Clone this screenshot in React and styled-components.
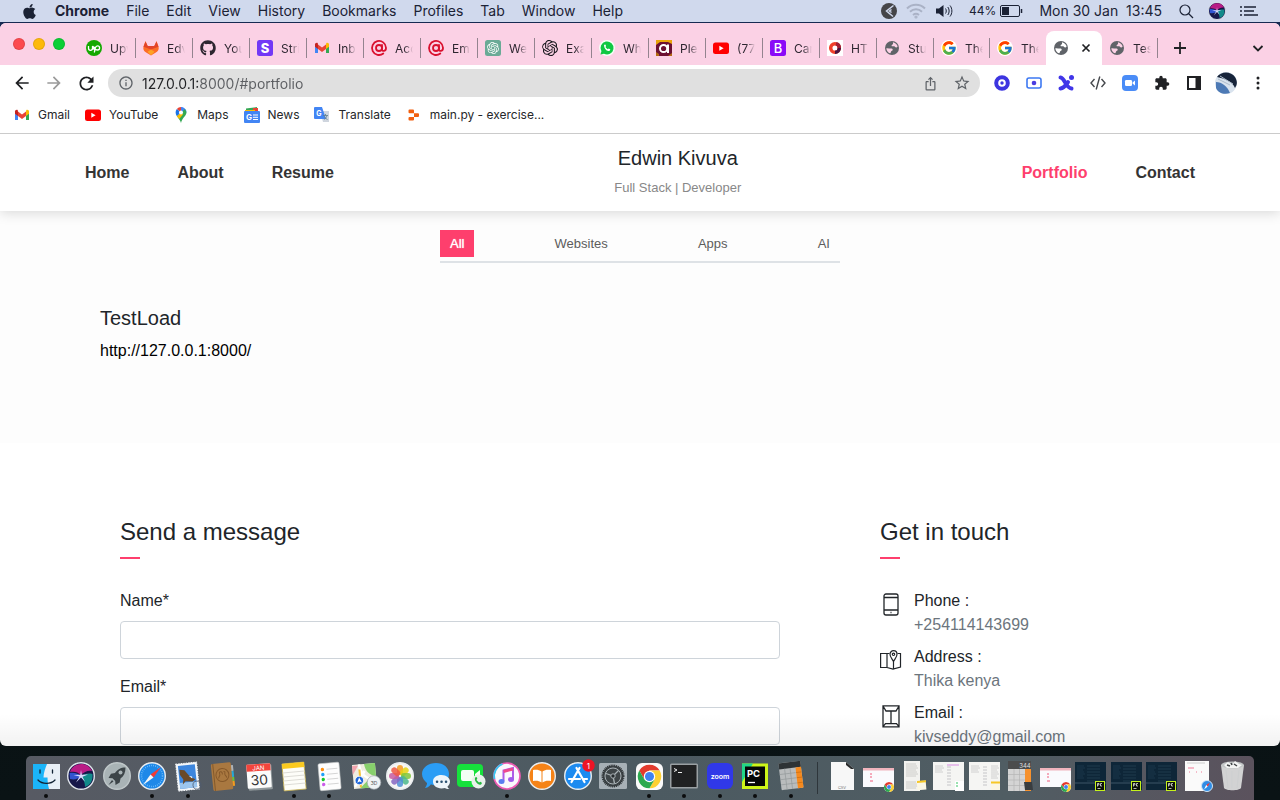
import React from "react";
import styled, { createGlobalStyle, css } from "styled-components";
import { FaApple, FaGithub } from "react-icons/fa";
import { FcGoogle } from "react-icons/fc";
import { SiOpenai } from "react-icons/si";
import { MdExtension, MdStarBorder, MdIosShare, MdArrowBack, MdArrowForward, MdRefresh, MdInfoOutline } from "react-icons/md";

const Global = createGlobalStyle`
  * { box-sizing: border-box; }
  body { margin: 0; background: #0a1214; }
  button, input { font: inherit; color: inherit; margin: 0; padding: 0; border: 0; background: none; }
  a { color: inherit; text-decoration: none; }
  svg { display: block; flex: none; overflow: visible; }
`;

const Desktop = styled.div`
  display: flex;
  flex-direction: column;
  height: 100vh;
  background: linear-gradient(#172a52 0 60px, #070f11 200px, #0a1315);
  font-family: Inter, "Liberation Sans", sans-serif;
`;

/* ---------- macOS menu bar ---------- */
const MenuBar = styled.header`
  display: flex;
  align-items: center;
  justify-content: space-between;
  height: 22px;
  margin-bottom: 1px;
  padding: 0 22px 0 21px;
  background: #d0d9ed;
  color: #1b2235;
  font-size: 14px;
  line-height: 22px;
`;
const MenuGroup = styled.nav`
  display: flex;
  align-items: center;
  gap: ${(p) => p.$gap}px;
`;
const MenuItem = styled.button`
  font-weight: ${(p) => (p.$strong ? 700 : 400)};
  white-space: pre;
`;
const Charge = styled.span`
  display: flex;
  align-items: center;
  gap: 4px;
  font-size: 12px;
`;

/* ---------- browser window ---------- */
const BrowserWindow = styled.div`
  display: flex;
  flex-direction: column;
  flex: 1;
  min-height: 0;
  overflow: hidden;
  border-radius: 6px;
  background: #fff;
`;
const TabStrip = styled.div`
  display: flex;
  align-items: flex-end;
  flex: none;
  height: 42px;
  background: #fbd1e5;
  color: #2d2630;
`;
const Lights = styled.div`
  display: flex;
  align-self: center;
  gap: 8px;
  width: 79px;
  padding-left: 13px;
`;
const Light = styled.button`
  width: 12px;
  height: 12px;
  border-radius: 50%;
  background: ${(p) => p.$color};
  box-shadow: inset 0 0 0 1px rgba(0, 0, 0, 0.1);
`;
const Tabs = styled.div`
  display: flex;
  flex: 1;
  min-width: 0;
`;
const Tab = styled.button`
  position: relative;
  display: flex;
  align-items: center;
  flex: 1 1 57px;
  min-width: 0;
  height: 34px;
  padding-left: 7px;
  gap: 8px;
  font-size: 12px;
  &:nth-last-child(-n + 4) { flex-basis: 56px; }
  &::after {
    content: "";
    position: absolute;
    right: 0;
    top: 7px;
    width: 1px;
    height: 20px;
    background: #94838f;
  }
  &:has(+ [aria-selected="true"])::after { display: none; }
  ${(p) =>
    p.$active &&
    css`
      background: #fff;
      border-radius: 8px 8px 0 0;
      &::after { display: none; }
    `}
`;
const TabTitle = styled.span`
  width: 18px;
  overflow: hidden;
  text-align: left;
  white-space: nowrap;
  mask-image: linear-gradient(90deg, #000 50%, transparent);
`;
const StripEnd = styled.div`
  display: flex;
  align-items: center;
  justify-content: space-between;
  width: 122px;
  height: 34px;
  padding: 0 14px;
`;
const IconButton = styled.button`
  display: flex;
  align-items: center;
  justify-content: center;
  width: ${(p) => p.$w || 16}px;
  color: ${(p) => p.$color || "#1f2023"};
`;
const Toolbar = styled.div`
  display: flex;
  align-items: center;
  flex: none;
  height: 36px;
  padding: 0 14px 0 13px;
`;
const NavButtons = styled.div`
  display: flex;
  gap: 14px;
  margin-right: 13px;
`;
const Omnibox = styled.div`
  display: flex;
  align-items: center;
  flex: 1;
  height: 28px;
  padding: 0 2px 0 10px;
  gap: 8px;
  border-radius: 14px;
  background: #e0e0e0;
  color: #5f6368;
`;
const Address = styled.input`
  flex: 1;
  min-width: 0;
  height: 28px;
  font-size: 14px;
  background: linear-gradient(90deg, #202124 0 56px, #5c5e62 56px);
  background-clip: text;
  -webkit-text-fill-color: transparent;
  outline: none;
`;
const Extensions = styled.div`
  display: flex;
  align-items: center;
  gap: 16px;
  margin-left: 14px;
`;
const Avatar = styled.button`
  margin: 0 -3px;
`;
const BookmarkBar = styled.nav`
  display: flex;
  align-items: flex-start;
  flex: none;
  gap: 15px;
  height: 33px;
  padding: 6px 14px 0;
  border-bottom: 1px solid #cbcbcb;
  font-size: 12px;
  line-height: 16px;
  color: #26272a;
`;
const Bookmark = styled.a`
  display: flex;
  align-items: center;
  gap: 8px;
`;

/* ---------- web page ---------- */
const Page = styled.div`
  position: relative;
  flex: 1;
  min-height: 0;
  overflow: hidden;
  font: 16px/24px "Liberation Sans", Arial, sans-serif;
  color: #212529;
  &::after {
    content: "";
    position: absolute;
    inset: auto 0 0;
    height: 32px;
    background: linear-gradient(transparent, rgba(0, 0, 0, 0.05));
    pointer-events: none;
  }
`;
const SiteHeader = styled.header`
  position: relative;
  background: #fff;
  box-shadow: 0 2px 12px rgba(0, 0, 0, 0.15);
`;
const HeaderInner = styled.div`
  display: flex;
  align-items: center;
  justify-content: space-between;
  max-width: 1140px;
  height: 77px;
  margin: 0 auto;
  padding: 0 15px;
`;
const SiteNav = styled.nav`
  display: flex;
  gap: 48px;
`;
const SiteLink = styled.a`
  font-weight: 700;
  color: ${(p) => (p.$active ? "#fe3f6d" : "#343434")};
`;
const Brand = styled.div`
  text-align: center;
`;
const BrandName = styled.h1`
  margin: 0 0 6px;
  font-size: 20px;
  line-height: 24px;
  font-weight: 400;
`;
const BrandRole = styled.p`
  margin: 0;
  font-size: 13px;
  line-height: 24px;
  color: #888;
`;
const PortfolioSection = styled.section`
  background: #fdfdfd;
  padding: 19px 0 80px;
`;
const Filters = styled.div`
  display: flex;
  justify-content: space-between;
  width: 400px;
  margin: 0 auto;
  padding-bottom: 4px;
  border-bottom: 2px solid #dee2e6;
`;
const Filter = styled.button`
  height: 27px;
  padding: 0 10px;
  font-size: 13px;
  color: ${(p) => (p.$active ? "#fff" : "#5c5c5c")};
  text-shadow: ${(p) => (p.$active ? "0 0 1px #fff" : "none")};
  background: ${(p) => (p.$active ? "#fe3f6d" : "transparent")};
`;
const Project = styled.article`
  max-width: 1140px;
  margin: 43px auto 0;
  padding: 0 30px;
`;
const ProjectTitle = styled.h2`
  margin: 0 0 9px;
  font-size: 20px;
  line-height: 24px;
  font-weight: 400;
`;
const ProjectLink = styled.a`
  color: #000;
`;
const ContactSection = styled.section`
  display: grid;
  grid-template-columns: 2fr 1fr;
  max-width: 1140px;
  margin: 0 auto;
  padding-top: 75px;
`;
const Column = styled.div`
  padding: 0 50px;
`;
const Heading = styled.h2`
  margin: 0 0 30px;
  font-size: 24px;
  line-height: 28px;
  font-weight: 400;
  &::after {
    content: "";
    display: block;
    width: 20px;
    height: 2px;
    margin-top: 11px;
    background: #fe3f6d;
  }
`;
const Label = styled.label`
  display: block;
  margin-bottom: 8px;
`;
const Field = styled.input`
  display: block;
  width: 100%;
  height: 38px;
  margin-bottom: 16px;
  padding: 6px 12px;
  border: 1px solid #ced4da;
  border-radius: 4px;
  background: #fff;
`;
const Info = styled.div`
  display: flex;
  gap: 12px;
  margin-bottom: 8px;
  svg { margin-top: 4px; }
`;
const InfoValue = styled.div`
  color: #6c757d;
`;

/* ---------- dock ---------- */
const Dock = styled.footer`
  display: flex;
  flex: none;
  height: 44px;
  margin: 10px 26px 0;
  padding: 0 4px 0 2px;
  border-radius: 5px 5px 0 0;
  background: linear-gradient(90deg, #575a63, #535c64 20%, #4c5a61 50%, #505d63 80%, #5b525d);
`;
const DockItem = styled.button`
  display: flex;
  flex: 1 1 0;
  flex-direction: column;
  align-items: center;
  justify-content: space-between;
  min-width: 0;
  padding: 6px 0 2px;
`;
const Running = styled.i`
  width: 4px;
  height: 4px;
  border-radius: 50%;
  background: #0b0c0d;
  visibility: ${(p) => (p.$on ? "visible" : "hidden")};
`;
const DockRule = styled.div`
  width: 16px;
  margin: 6px 0;
  background: linear-gradient(90deg, transparent 9px, #2e363b 9px 10px, transparent 10px);
`;

/* ---------- drawings ---------- */
const Svg = ({ s = 16, w, h, v, children, ...r }) => (
  <svg width={w || s} height={h || s} viewBox={v || `0 0 ${w || s} ${h || s}`} fill="none" aria-hidden="true" {...r}>
    {children}
  </svg>
);
const T = (p) => <text textAnchor="middle" fontFamily="Inter, sans-serif" fill="#fff" {...p} />;

const Gmail = () => (
  <Svg>
    <path d="M1 4v9h3V7z" fill="#4285f4" />
    <path d="M12 7v6h3V4z" fill="#34a853" />
    <path d="M12 5v4l3-2.300V4.500C15 3 13.500 2.200 12.300 3z" fill="#fbbc04" />
    <path d="M4 5v4L1 6.700V4.500C1 3 2.500 2.200 3.700 3z" fill="#c5221f" />
    <path d="M4 9V4.500l4 3 4-3V9l-4 3z" fill="#ea4335" />
  </Svg>
);
const YouTube = () => (
  <Svg>
    <rect y="2.500" width="16" height="11.500" rx="2.500" fill="#f00" />
    <path d="M6.300 5.800v5l4.300-2.500z" fill="#fff" />
  </Svg>
);
const Upwork = () => (
  <Svg>
    <circle cx="8" cy="8" r="8" fill="#14a800" />
    <path d="M2.500 6v2.300a2 2 0 0 0 4 0V6c.8 2.800 1.800 4 3 4.300M8.300 12.500l1-4.500c.4-1.600 1.200-2.200 2.200-2.200a2.100 2.100 0 1 1 0 4.200c-1.500 0-3-1.300-4-3.500" stroke="#fff" strokeWidth="1.300" />
  </Svg>
);
const Gitlab = () => (
  <Svg>
    <path d="M.5 6.500 2.500 1l2.200 5h6.600l2.200-5 2 5.500c.6 2.500 0 4-1.500 5.200L8 15.500l-6-3.800C.5 10.500 0 9 .5 6.500z" fill="#fc6d26" />
    <path d="M2.500 1.500 4.700 6h6.600l2.200-4.500 2 5.200-3.500 1.200L8 9.500 4 8 .5 6.700z" fill="#e24329" />
    <path d="M4.500 11.800 8 9.400l3.500 2.400L8 15.300z" fill="#fca326" />
  </Svg>
);
const Stripe = () => (
  <Svg>
    <rect width="16" height="16" rx="2.500" fill="#7338f6" />
    <T x="8" y="12.500" fontSize="13" fontWeight="800">S</T>
  </Svg>
);
const MailRu = () => (
  <Svg stroke="#d9112f" strokeWidth="1.800" strokeLinecap="round">
    <circle cx="8" cy="8" r="3" />
    <path d="M11 5v4.200c0 2.800 4.200 2 4-1.500a7 7 0 1 0-2.700 5.800" />
  </Svg>
);
const Gpt = () => (
  <Svg>
    <rect width="16" height="16" rx="2.500" fill="#6aaa96" />
    <SiOpenai x="2" y="2" size={12} color="#fff" />
  </Svg>
);
const WhatsApp = () => (
  <Svg>
    <circle cx="8" cy="8" r="8" fill="#f4fff6" />
    <path d="M1.500 14.500 2.400 11.200A6.500 6.500 0 1 1 5 13.700z" fill="#10c843" />
    <path d="M5 5.200c.5-1 1.200-1 1.500-.4l.6 1.300-.6 1c.6 1.100 1.300 1.700 2.300 2.200l.9-.9 1.500.8c.3 1.200-.8 1.900-1.800 1.800C7 10.600 5 8.200 5 5.200z" fill="#fff" />
  </Svg>
);
const Aplus = () => (
  <Svg>
    <path d="M0 0h16v16H0z" fill="#6c1033" />
    <path d="M0 0h16v4L12 2H4L0 5z" fill="#e9a40b" />
    <path d="M0 16v-4l3 2v2zM16 16v-3l-4 3z" fill="#b56a13" />
    <circle cx="7.600" cy="8.500" r="3.600" stroke="#fff" strokeWidth="2" />
    <path d="M12 4.500V13" stroke="#fff" strokeWidth="2" />
  </Svg>
);
const Bootstrap = () => (
  <Svg>
    <rect width="16" height="16" rx="2.500" fill="#8a0af8" />
    <T x="8" y="12.500" fontSize="13" fontWeight="500">B</T>
  </Svg>
);
const HtmlDoc = () => (
  <Svg>
    <path d="M0 0h16v16H0z" fill="#fff" />
    <circle cx="8" cy="8" r="4.300" stroke="#f0402a" strokeWidth="3.500" />
    <path d="M8 12.300A4.300 4.300 0 0 0 12.300 8" stroke="#4a1340" strokeWidth="3.500" />
    <path d="M12.300 8A4.300 4.300 0 0 0 9 3.800" stroke="#a11f35" strokeWidth="3.500" />
  </Svg>
);
const Globe = ({ on = "#fbd1e5" }) => (
  <Svg>
    <circle cx="8" cy="8" r="7" fill="#5f6368" />
    <path d="M9 2.200c1.800.3 3.700 1.700 4.400 3.600.4 1.200-.2 1.800-1.300 1.700-1-.1-.9-1.200-2-1.300-1.200-.1-2.300.6-2.500-.5-.2-1 1.300-.9 1.500-1.900.1-.6-.4-1-.1-1.600zM2.300 8.200c1.700-.2 3 .2 4.500.4 1.100.1 2.100.4 1.900 1.400-.2.900-1.400.8-1.700 1.600-.2.700-.1 1.500-.9 1.700-1.900-.6-3.700-2.600-3.800-5.100z" fill={on} />
  </Svg>
);
const Google = () => (
  <Svg>
    <circle cx="8" cy="8" r="8" fill="#fff" />
    <FcGoogle x="0" y="0" size={16} />
  </Svg>
);
const MapsPin = () => (
  <Svg>
    <path d="M8 0a5.500 5.500 0 0 0-4.200 2L8 5.500z" fill="#ea4335" />
    <path d="M8 0c3.300 0 5.500 2.600 5.500 5.300L8 5.500 8 0z" fill="#4285f4" />
    <path d="M3.800 2C2 4.300 2.400 7 3.900 9.200L8 5.500z" fill="#1a73e8" />
    <path d="M13.500 5.300C13.500 9 9 11 8 16 7.300 13 5.500 11.500 3.900 9.200L12 2z" fill="#34a853" />
    <path d="M3.900 9.200 8 5.500l2 2-3.800 4.600z" fill="#fbbc04" />
    <circle cx="8" cy="5.500" r="2" fill="#fff" />
  </Svg>
);
const News = () => (
  <Svg>
    <path d="M2 1.500 13 0v4H2z" fill="#34a853" />
    <path d="M9 1h5v4H9z" fill="#ea4335" />
    <path d="M1 3h10v3H1z" fill="#fbbc04" />
    <rect y="4" width="16" height="12" rx="1" fill="#4285f4" />
    <T x="5" y="13" fontSize="8" fontWeight="700">G</T>
    <path d="M9 8h5M9 10.300h5M9 12.500h5" stroke="#fff" />
  </Svg>
);
const Translate = () => (
  <Svg>
    <path d="M6 4h9v11H9z" fill="#cfd5de" />
    <path d="M1 0h7l4 12H1a1 1 0 0 1-1-1V1a1 1 0 0 1 1-1z" fill="#4285f4" />
    <T x="5" y="8.500" fontSize="7" fontWeight="700">G</T>
    <path d="M9 8.500h5M11.500 7v1.500M13 8.500c-.5 2-2 3.500-3 4M10.500 9.500c.5 1.500 2 2.500 3 3" stroke="#607d8b" strokeWidth=".8" />
  </Svg>
);
const Replit = () => (
  <Svg>
    <path d="M3.500 2.500H7a1 1 0 0 1 1 1v2.700H3.500a1 1 0 0 1-1-1V3.500a1 1 0 0 1 1-1zM8 6.200h4a1 1 0 0 1 1 1v1.700a1 1 0 0 1-1 1H8zM3.500 9.900H8v2.700a1 1 0 0 1-1 1H3.500a1 1 0 0 1-1-1v-1.700a1 1 0 0 1 1-1z" fill="#f25f0f" />
  </Svg>
);

const tabs = [
  ["Upv", Upwork], ["Edv", Gitlab], ["You", () => <FaGithub size={16} />], ["Stri", Stripe], ["Inb", Gmail],
  ["Acc", MailRu], ["Em", MailRu], ["We", Gpt], ["Exa", () => <SiOpenai size={16} color="#17171c" />],
  ["Wh", WhatsApp], ["Ple", Aplus], ["(77", YouTube], ["Car", Bootstrap], ["HT", HtmlDoc],
  ["Stu", Globe], ["The", Google], ["The", Google], [null, () => <Globe on="#fff" />], ["Tes", Globe],
];
const bookmarks = [
  ["Gmail", Gmail], ["YouTube", YouTube], ["Maps", MapsPin], ["News", News], ["Translate", Translate], ["main.py - exercise...", Replit],
];

const PhoneIcon = () => (
  <Svg s={22} stroke="#212529" strokeWidth="1.300">
    <rect x="4" y="1" width="14" height="21" rx="2" />
    <path d="M4 4.500h14M4 17h14" />
    <path d="M10.500 19.500h1" />
  </Svg>
);
const MapIcon = () => (
  <Svg s={22} stroke="#212529" strokeWidth="1.200">
    <path d="M9.500 4.500H7L.6 4.500v14H7l6 1.600 7.500-2V4.500h-3M7 4.500v14M13.500 12.500v7.500" />
    <path d="M13.500 12.500c-1.500-3-3.500-4.500-3.500-7.300a3.500 3.500 0 0 1 7 0c0 2.800-2 4.300-3.500 7.300z" />
    <circle cx="13.500" cy="5.300" r="1.200" />
  </Svg>
);
const MailIcon = () => (
  <Svg s={22} stroke="#212529" strokeWidth="1.300">
    <path d="M3 .8h16v21H3zM3 1l3 5h10l3-5M3 21.600l2.500-3h11l2.500 3M11 6v12.500" />
  </Svg>
);

/* dock drawings, all on a 28px square */
const Disc = ({ fill, ring = "#e9edf0" }) => <circle cx="14" cy="14" r="13.300" fill={fill} stroke={ring} strokeWidth="1.400" />;
const ChromeMark = ({ x = 14, y = 14, k = 1 }) => (
  <g transform={`translate(${x} ${y}) scale(${k})`}>
    <circle r="12" fill="#fff" />
    <path d="M-10.400-6A12 12 0 0 1 10.400-6L0-6-5.200 3z" fill="#e33b2e" />
    <path d="M10.400-6A12 12 0 0 1 0 12L5.200 3 0-6z" fill="#fdd032" />
    <path d="M0 12A12 12 0 0 1-10.400-6L-5.200 3 5.200 3z" fill="#2da94f" />
    <circle r="5.800" fill="#fff" />
    <circle r="4.600" fill="#3f82f1" />
  </g>
);
const PyMark = ({ x = 16, y = 17, s = 10 }) => (
  <g transform={`translate(${x} ${y})`}>
    <rect width={s} height={s} fill="#c5f21b" />
    <rect x="1" y="1" width={s - 2} height={s - 2} fill="#0b1008" />
    <path d="M2.500 5.500v-3h1.500v1.500h-1.500M7 2.500h-1.500v2.500h1.500M2.500 7.500h3" stroke="#fff" strokeWidth=".7" />
  </g>
);
const CalcBody = () => (
  <g transform="rotate(-7 14 14)">
    <rect x="3" y="0" width="22" height="27" rx="1" fill="#b9bcbd" />
    <path d="M3 0h22v6H3z" fill="#2e3335" />
    <path d="M19.500 6H25v21h-5.500z" fill="#f68a1e" />
    <path d="M8.500 6v21M14 6v21M3 11.200h16M3 16.400h16M3 21.600h16" stroke="#959a9c" strokeWidth=".7" />
    <path d="M19.500 11.200H25M19.500 16.400H25M19.500 21.600H25" stroke="#c96c11" strokeWidth=".7" />
  </g>
);
const SiriBody = ({ c = 14 }) => (
  <g transform={`scale(${c / 14})`}>
    <circle cx="14" cy="14" r="13.300" fill="#17174a" stroke="#dfe4ea" strokeWidth="1.400" />
    <path d="M3 10C6 0 21-1 25 9c-4-1-8 1-11 4-3-3-7-4-11-3z" fill="#b91c86" />
    <path d="M2.500 11c5-1 9 1 11.500 3-3 3-6 4-11 3z" fill="#3153d0" />
    <path d="M25.500 12c-5-1-8 0-11.500 2 3 4 4 7 4 11 6-2 8-7 7.500-13z" fill="#128a8a" />
    <path d="m14 8 .8 4.800 6.200-.3-5.500 2.300 2.500 5-4-4.200-5 5 3.500-6-6-1.600 6.800-.3z" fill="#d9dcff" />
  </g>
);
const Finder = () => (
  <><rect x="1" y="2" width="27" height="25" fill="#1ea5f4" /><path d="M1 2h14c-2 5-3.500 9-3.500 13.500h4c0 4 .5 8 1.500 11.500H1z" fill="#1bb4f8" /><path d="M15 2h13v25H17c-1-3.500-1.500-7.500-1.500-11.500h-4C11.500 11 13 7 15 2z" fill="#e8eff6" /><path d="M8 8v3M20.500 8v3M6 18c4 4.500 13 4.500 17 0" stroke="#123" strokeWidth="1.300" strokeLinecap="round" /></>
);
const Rocket = () => (
  <><Disc fill="#a9b3b6" ring="#bfc7c9" /><path d="M22.500 5.500c-5 0-8 2-10.500 5.500l-4 .8L5.500 16l4 .3 2.700 2.700.3 4 4.200-2.500.8-4c3.500-2.500 5-6 5-11zM9 18l-3.500 5 5-3.500z" fill="#3d4549" /><circle cx="17.500" cy="10.500" r="2" fill="#a9b3b6" /></>
);
const Safari = () => (
  <><Disc fill="#1e88e8" /><circle cx="14" cy="14" r="10.500" stroke="#8fd0ff" strokeWidth="1.500" strokeDasharray=".6 1.500" /><path d="m23 5-7.500 10.500-3-3z" fill="#f13a33" /><path d="m5 23 7.500-10.500 3 3z" fill="#f4f6f8" /></>
);
const MailStamp = () => (
  <g transform="rotate(-6 14 14)"><rect x="3" y="1" width="21" height="27" fill="#f3f6f8" stroke="#f3f6f8" strokeDasharray="1.500 1" /><rect x="5" y="3" width="17" height="23" fill="#3d86dd" /><path d="M5 20h17v6H5z" fill="#9cc6ee" /><path d="m6 7 5 1 5 7 5 3-3 2-7-1-3 3 1-5-3-5z" fill="#6a4a28" /><path d="m15 14 3 1v2z" fill="#fff" /><circle cx="22" cy="24" r="4" stroke="#4f5b70" strokeWidth=".8" /></g>
);
const Contacts = () => (
  <g transform="rotate(-6 14 14)"><path d="M22 4h3v6h-3z" fill="#aeb4b8" /><path d="M22 10h3v6h-3z" fill="#26a8d8" /><path d="M22 16h3v4h-3z" fill="#6bbf3c" /><path d="M22 20h3v5h-3z" fill="#f39c1f" /><rect x="3" y="1" width="20" height="27" rx="1.500" fill="#a97840" /><path d="M5 1v27" stroke="#845a2b" /><circle cx="13.500" cy="13" r="6.500" stroke="#86592a" /><path d="M9.500 16c0-2 1.500-2 1.500-3.500s-1-3 1-3 1.500 2 1.500 3M17.500 16c0-2-1.500-2-1.500-3.500s1-3-1-3" stroke="#86592a" /></g>
);
const Calendar = () => (
  <g transform="rotate(-4 14 14)"><rect x="3" y="3" width="24" height="25" rx="1" fill="#90989b" /><rect x="2" y="2" width="24" height="24" rx="1" fill="#fbfbfb" /><path d="M2 2h24v7H2z" fill="#f2453c" /><T x="14" y="8" fontSize="6">JAN</T><T x="14" y="23" fontSize="14" fill="#333">30</T></g>
);
const Notes = () => (
  <g transform="rotate(-5 14 14)"><rect x="3" y="1" width="22" height="27" fill="#fdfdf8" stroke="#c8b14e" strokeWidth=".8" /><path d="M3 1h22v5H3z" fill="#fbca1f" /><path d="M3 10h22M3 14h22M3 18h22M3 22h22" stroke="#dddcd6" /></g>
);
const Reminders = () => (
  <g transform="rotate(-5 14 14)"><rect x="4" y="1" width="21" height="27" rx="1.500" fill="#fdfdfd" stroke="#c7c9c9" strokeWidth=".6" /><circle cx="8" cy="7" r="1.700" fill="#ff8e0e" /><circle cx="8" cy="12" r="1.700" fill="#1ea0f7" /><circle cx="8" cy="17" r="1.700" fill="#19c92c" /><circle cx="8" cy="22" r="1.700" fill="#cb5ae9" /><path d="M12 7h11M12 12h11M12 17h11M12 22h11" stroke="#d5d5d5" /></g>
);
const AppleMaps = () => (
  <><g transform="rotate(-5 14 14)"><rect x="2" y="2" width="23" height="24" fill="#efece0" /><path d="M14 2h11v13c-6-1-10-5-11-13z" fill="#87cf6c" /><path d="M2 3h6l-6 9z" fill="#f2a3ad" /><path d="m8 26 8-7 4 7z" fill="#87cf6c" /><path d="M9 2C9 12 16 18 25 19M3 24 14 9" stroke="#fff" strokeWidth="2.500" /><path d="M9 7v18" stroke="#f5c237" strokeWidth="2" /><circle cx="8" cy="18" r="4.300" fill="#1f66d8" stroke="#fff" strokeWidth=".8" /><path d="m8 15 2.300 5L8 19l-2.300 1z" fill="#fff" /></g><circle cx="23" cy="20.500" r="6.800" fill="#eff3f5" stroke="#a0a8ad" strokeWidth=".7" /><T x="23" y="22.500" fontSize="5" fill="#555">3D</T></>
);
const Photos = () => (
  <><Disc fill="#f6f6f4" />{["#f79a1e", "#e5d414", "#7fc53b", "#4cb98b", "#4d8fd5", "#8566c2", "#c75ca0", "#ee5842"].map((c, i) => <rect key={c} x="11" y="3" width="6" height="10" rx="3" fill={c} opacity=".85" transform={`rotate(${i * 45} 14 14)`} />)}</>
);
const Messages = () => (
  <><path d="M14 1c7.500 0 13 4.500 13 11s-5.500 11-13 11c-2 0-3.500 0-5-.8C7 25 4.500 26 3 26c1.500-2 2-3.500 2-5C2.500 19 0 16 0 12 0 5.500 6.500 1 14 1z" fill="#2b9df5" /><path d="M19.500 13c5 0 8.500 3 8.500 6.500 0 2-1 3.700-2.500 5 .2 1 .8 2 2 2.500-2 .2-3.500-.3-4.500-1-1 .3-2 .4-3.500.4-5 0-8.500-3-8.500-6.900s3.500-6.500 8.500-6.500z" fill="#eef5fa" /><path d="M15 19.700h.1M19.500 19.700h.1M24 19.700h.1" stroke="#2b5272" strokeWidth="2.500" strokeLinecap="round" /></>
);
const FaceTime = () => (
  <><rect x="0" y="2" width="26" height="23" rx="4" fill="#16e13c" /><rect x="4" y="8" width="13" height="11" rx="2" fill="#f3fff4" /><path d="m18 12 5-4v11l-5-4z" fill="#f3fff4" /><circle cx="21.500" cy="19.500" r="7" fill="#e9f1eb" /><path d="M18 16c.8-1.500 1.800-1 2.300.6l-.8 1.300 2.500 2.600 1.500-.7c1.300.6 2 1.600.5 2.700-2.500 1.500-7-3.500-6-6.500z" fill="#25b840" /></>
);
const ITunes = () => (
  <><circle cx="14" cy="14" r="13" fill="#fbf8fd" stroke="#ef5bb5" strokeWidth="1.700" /><path d="M1.500 17a13 13 0 0 1 8-15" stroke="#37c7f0" strokeWidth="1.700" /><path d="M10.500 19V8.500L20 6v11" stroke="#b05be8" strokeWidth="2" /><path d="M10.500 9.500 20 7" stroke="#ee4a8e" strokeWidth="3" /><ellipse cx="8.500" cy="19.500" rx="3" ry="2.500" fill="#5b7df1" /><ellipse cx="18" cy="17.500" rx="3" ry="2.500" fill="#a15bea" /></>
);
const Books = () => (
  <><Disc fill="#f58317" /><path d="M13.500 9.500C11 7.500 8 7.500 5 8v11c3-.5 6-.5 8.500 1.500zM14.500 9.500C17 7.500 20 7.500 23 8v11c-3-.5-6-.5-8.500 1.500z" fill="#fff" /></>
);
const AppStore = () => (
  <><Disc fill="#1d8bf0" /><path d="m15.500 6-8 14M12.500 6l8 14M5 17h11M19 17h4" stroke="#fff" strokeWidth="2.200" strokeLinecap="round" /><circle cx="24.500" cy="3.500" r="6.200" fill="#ee1425" /><T x="24.500" y="6.500" fontSize="8">1</T></>
);
const Settings = () => (
  <><rect y="1" width="28" height="26" rx="1.500" fill="#a7b0b6" /><circle cx="14" cy="14" r="10.500" fill="#3f4548" stroke="#2d3235" strokeWidth="2" strokeDasharray="1 .8" /><circle cx="14" cy="14" r="8" stroke="#a9b1b5" /><path d="M14 14 7 11.500M14 14l5.500-5.500M14 14l1.500 7.500" stroke="#a9b1b5" strokeWidth="1.300" /><circle cx="14" cy="14" r="2.200" fill="#252a2d" stroke="#a9b1b5" /></>
);
const ChromeApp = () => (<><rect x="1" y="1" width="27" height="27" rx="6" fill="#fafafa" /><ChromeMark x={14.5} y={14.5} k={0.98} /></>);
const Terminal = () => (<><rect x="0" y="1.500" width="28" height="25" rx="1.500" fill="#9aa0a3" /><rect x="1.500" y="3" width="25" height="22" fill="#202122" /><path d="m4 6.500 3 1.500-3 1.500M8 10.500h4" stroke="#eee" /></>);
const Zoom = () => (<><rect x="1" y="1" width="26" height="26" rx="6" fill="#3038e8" /><T x="14" y="16.500" fontSize="7" fontWeight="600">zoom</T></>);
const PyCharm = () => (<><rect x="1" y="1.500" width="26" height="25.500" fill="#cdf519" /><path d="M1 1.500h11L1 20z" fill="#21d789" /><rect x="4" y="4.500" width="20" height="19.500" fill="#050807" /><T x="12.500" y="14.500" fontSize="9.500" fontWeight="700">PC</T><path d="M7 20.500h7" stroke="#fff" strokeWidth="1.300" /></>);
const CsvFile = () => (<><path d="M3 0h15l8 7v21H3z" fill="#f7f7f7" /><path d="m18 0 8 7h-3l-5-4z" fill="#282a2b" /><T x="14" y="26.500" fontSize="4" fill="#777">CSV</T></>);
const ChromeShot = () => (<><rect x="-1" y="6" width="31" height="19" fill="#fafafd" /><path d="M-1 6h31v2.500H-1z" fill="#f0b4bd" /><path d="M6 12h2M6 15h2M6 19h3" stroke="#ef5b7a" /><ChromeMark x={25} y={25} k={0.42} /></>);
const lines = (x, w, from, to, step = 2) => {
  let d = "";
  for (let y = from; y < to; y += step) d += `M${x} ${y}h${w - (y % 3)}`;
  return d;
};
const TextDoc = () => (<><rect x="5" y="-1" width="16" height="30" fill="#f2f2ef" /><path d={lines(7, 12, 2, 15) + lines(7, 12, 20, 27)} stroke="#c4c4c1" strokeWidth=".8" /><rect x="18" y="19" width="9" height="9" fill="#fbf6e4" transform="rotate(-5 22 23)" /><path d="m18 19 9-.7v2l-9 .7z" fill="#f6c726" /></>);
const TwoPane = ({ b }) => (<><rect x="-1" y="0" width="31" height="28" fill="#f5f5f3" /><path d={lines(1, 9, 4, 12)} stroke="#c6c6c6" strokeWidth=".8" /><path d={lines(13, 6, 5, 26, 3)} stroke="#b9b9bd" strokeWidth=".8" />{b ? <><path d={lines(21, 8, 4, 18)} stroke="#c6c6c6" strokeWidth=".8" /><path d="M21 20h9v8h-9z" fill="#fbf6e4" /><path d="M21 19.500h9v2h-9z" fill="#f6c726" /></> : <><path d="M13 3h12" stroke="#d98be4" /><path d="M21 19h9v10h-9z" fill="#fff" /><path d="M22 21h2M22 24h2" stroke="#36c463" /></>}</>);
const CalcShot = () => (<><rect x="3" y="-1" width="23" height="30" fill="#d4d4d4" /><path d="M3-1h23v8H3z" fill="#4b4c4d" /><path d="M20 7h6v22h-6z" fill="#f6912d" /><path d="M9 7v22M14.500 7v22M3 12.500h17M3 18h17M3 23.500h17" stroke="#b5b5b5" strokeWidth=".7" /><T x="20" y="5.500" fontSize="6" fill="#ddd">344</T><path d="M19 20h8l1 8h-8z" fill="#393d40" /></>);
const CodeShot = () => (<><rect x="-1" y="0" width="31" height="28" fill="#0e2638" /><path d={lines(1, 8, 4, 18)} stroke="#1f3f55" strokeWidth=".7" /><path d={lines(11, 14, 4, 20, 3)} stroke="#274558" strokeWidth=".7" /><path d="M-1 21h31" stroke="#3d5566" /><PyMark x={19} y={19} /></>);
const SafariShot = () => (<><rect x="2" y="-1" width="24" height="30" fill="#fafafa" /><path d="M4 1h18" stroke="#ccc" /><path d="M5 6h6M6 10h1M13 10h1M18 10h1" stroke="#f07a98" /><circle cx="24" cy="24" r="5.500" fill="#2f8de6" stroke="#cfe4f5" /><path d="m27 20.500-2.300 4-1.500-1.500z" fill="#f33" /><path d="m21 27.500 2.200-4.500 1.500 1.500z" fill="#fff" /></>);
const Trash = () => (<><path d="M3 3h23l-3 23c-2 3-15 3-17 0z" fill="#dcdddd" opacity=".92" /><ellipse cx="14.500" cy="3" rx="11.500" ry="3.500" fill="#c2c5c6" /><path d="m6 3 4-3 4 3 3-4 4 3 3 1-4 3H9z" fill="#f4f4f4" /><path d="m9 3 3 1M16 2l3 2M13 1l1 2" stroke="#404345" strokeWidth="1.500" /><path d="m8 8 2 18M21 8l-2 18M14 9v17" stroke="#cdcfd0" /></>);

const dock = [
  ["Finder", Finder, 1], ["Siri", SiriBody], ["Launchpad", Rocket], ["Safari", Safari, 1], ["Mail", MailStamp, 1], ["Contacts", Contacts],
  ["Calendar", Calendar], ["Notes", Notes, 1], ["Reminders", Reminders, 1], ["Maps", AppleMaps], ["Photos", Photos], ["Messages", Messages],
  ["FaceTime", FaceTime], ["iTunes", ITunes, 1], ["Books", Books], ["App Store", AppStore], ["System Preferences", Settings],
  ["Chrome", ChromeApp, 1], ["Terminal", Terminal, 1], ["Zoom", Zoom, 1], ["PyCharm", PyCharm, 1], ["Calculator", CalcBody, 1],
  null,
  ["CSV file", CsvFile], ["Chrome window", ChromeShot], ["Note", TextDoc], ["Reminders window", TwoPane], ["Notes window", () => <TwoPane b />],
  ["Calculator window", CalcShot], ["Chrome window", ChromeShot], ["Project", CodeShot], ["Project", CodeShot], ["Project", CodeShot],
  ["Safari window", SafariShot], ["Trash", Trash],
];

function SystemMenu() {
  return (
    <MenuBar>
      <MenuGroup $gap={17}>
        <MenuItem aria-label="Apple menu"><FaApple size={17} /></MenuItem>
        <MenuItem $strong>Chrome</MenuItem>
        {["File", "Edit", "View", "History", "Bookmarks", "Profiles", "Tab", "Window", "Help"].map((m) => (
          <MenuItem key={m}>{m}</MenuItem>
        ))}
      </MenuGroup>
      <MenuGroup $gap={16}>
        <MenuGroup $gap={9}>
          <Svg><circle cx="8" cy="8" r="8" fill="#454548" /><path d="m12.500 2.500-7 5.500 6.500 5.500M10.500 6.500l-2 1.500 2 1.500" stroke="#d0d9ed" strokeWidth="1.500" /></Svg>
          <Svg w={20} h={16} stroke="#aab2c6" strokeWidth="2"><path d="M1 5.500c5-5 13-5 18 0M4 8.800c3.500-3.300 8.500-3.300 12 0M7 12c2-1.600 4-1.600 6 0" /><circle cx="10" cy="14" r=".6" /></Svg>
          <Svg w={18} h={16}><path d="M1 5.500h3L8.500 2v12L4 10.500H1z" fill="#1b2235" /><path d="M10.500 5.500c1 1.500 1 3.500 0 5M12.800 4c1.800 2.300 1.800 5.700 0 8M15 2.500c2.500 3 2.500 8 0 11" stroke="#1b2235" /></Svg>
        </MenuGroup>
        <Charge>44%<Svg w={23} h={12}><rect x=".5" y=".5" width="19" height="11" rx="1.500" stroke="#1b2235" /><path d="M2 2h7v8H2z" fill="#1b2235" /><path d="M21.500 4v4" stroke="#1b2235" strokeWidth="1.500" /></Svg></Charge>
        <MenuItem>{"Mon 30 Jan  13:45"}</MenuItem>
        <MenuGroup $gap={14}>
          <Svg stroke="#1b2235" strokeWidth="1.200"><circle cx="7" cy="7" r="5" /><path d="m10.500 10.500 4.500 4.500" /></Svg>
          <Svg s={18}><SiriBody c={9} /></Svg>
          <Svg w={18} h={16} stroke="#1b2235" strokeWidth="1.700"><path d="M0 4h2M0 8h2M0 12h2M4 4h12M4 8h10M4 12h14" /></Svg>
        </MenuGroup>
      </MenuGroup>
    </MenuBar>
  );
}

function BrowserChrome() {
  return (
    <>
      <TabStrip>
        <Lights>
          <Light $color="#fc4a4f" aria-label="Close" />
          <Light $color="#fdb90b" aria-label="Minimise" />
          <Light $color="#0bcf35" aria-label="Zoom" />
        </Lights>
        <Tabs role="tablist">
          {tabs.map(([title, Icon], i) => (
            <Tab key={i} role="tab" $active={!title} aria-selected={!title} aria-label={title || "Portfolio"}>
              <Icon />
              {title ? <TabTitle>{title}</TabTitle> : <Svg s={18} stroke="#202124" strokeWidth="1.700"><path d="m5.500 5.500 7 7M12.500 5.500l-7 7" /></Svg>}
            </Tab>
          ))}
        </Tabs>
        <StripEnd>
          <IconButton aria-label="New tab"><Svg s={14} stroke="#202124" strokeWidth="1.800"><path d="M7 1v12M1 7h12" /></Svg></IconButton>
          <IconButton aria-label="Search tabs"><Svg s={14} stroke="#202124" strokeWidth="1.800"><path d="m2.500 5 4.500 4.500L11.500 5" /></Svg></IconButton>
        </StripEnd>
      </TabStrip>
      <Toolbar>
        <NavButtons>
          <IconButton $w={18} aria-label="Back"><MdArrowBack size={20} /></IconButton>
          <IconButton $w={18} $color="#9b9b9b" aria-label="Forward"><MdArrowForward size={20} /></IconButton>
          <IconButton $w={18} aria-label="Reload"><MdRefresh size={21} /></IconButton>
        </NavButtons>
        <Omnibox>
          <MdInfoOutline size={16} />
          <Address aria-label="Address" defaultValue="127.0.0.1:8000/#portfolio" />
          <MdIosShare size={15} />
          <IconButton $w={32} $color="#5f6368" aria-label="Bookmark this page"><MdStarBorder size={18} /></IconButton>
        </Omnibox>
        <Extensions>
          <Svg><circle cx="8" cy="8" r="5.800" stroke="#3d35e0" strokeWidth="4" /><circle cx="8" cy="8" r="1.700" fill="#3d35e0" /></Svg>
          <Svg><rect x="1" y="3" width="14" height="10" rx="2" stroke="#3d78f2" strokeWidth="1.600" /><circle cx="8" cy="8" r="2.300" fill="#4a3de0" /></Svg>
          <Svg><path d="M2.500 2.500C7 3 7.500 13 13.500 13.500M10 7C8.500 9 6.500 13 2.500 13.500" stroke="#4136e8" strokeWidth="4" strokeLinecap="round" /><circle cx="13.500" cy="2.500" r="2.500" fill="#4136e8" /></Svg>
          <Svg stroke="#45484c" strokeWidth="1.400"><path d="M4.500 4 1 8l3.500 4M11.500 4 15 8l-3.500 4M9.800 1.500l-3.600 13" /></Svg>
          <Svg><rect width="16" height="16" rx="4" fill="#4a8cf7" /><rect x="3" y="5" width="7" height="6" rx="1.300" fill="#fff" /><path d="m10.500 7.500 2.500-2v5l-2.500-2z" fill="#fff" /></Svg>
          <MdExtension size={16} color="#202124" />
          <Svg><path d="M2 2h12v12H2z" stroke="#202124" strokeWidth="2" /><path d="M9.500 2H14v12H9.500z" fill="#202124" /></Svg>
          <Avatar aria-label="Profile"><Svg s={22}><circle cx="11" cy="11" r="11" fill="#d9e3ee" /><path d="M2 5C6-1 16-1 20 5c3 5 2 8 0 11C17 9 10 7 2 5z" fill="#17243a" /><path d="M1 10c6 0 11 4 14 11-6 2-12 0-14-5z" fill="#4d7ab5" /><path d="m3 7 12 6M5 4l13 8" stroke="#aebccb" /></Svg></Avatar>
          <IconButton aria-label="Menu"><Svg w={4} h={16}><circle cx="2" cy="3" r="1.500" fill="#202124" /><circle cx="2" cy="8" r="1.500" fill="#202124" /><circle cx="2" cy="13" r="1.500" fill="#202124" /></Svg></IconButton>
        </Extensions>
      </Toolbar>
      <BookmarkBar>
        {bookmarks.map(([name, Icon]) => (
          <Bookmark key={name} href="#"><Icon />{name}</Bookmark>
        ))}
      </BookmarkBar>
    </>
  );
}

function Portfolio() {
  return (
    <Page>
      <SiteHeader>
        <HeaderInner>
          <SiteNav>
            <SiteLink href="#home">Home</SiteLink>
            <SiteLink href="#about">About</SiteLink>
            <SiteLink href="#resume">Resume</SiteLink>
          </SiteNav>
          <Brand>
            <BrandName>Edwin Kivuva</BrandName>
            <BrandRole>Full Stack | Developer</BrandRole>
          </Brand>
          <SiteNav>
            <SiteLink href="#portfolio" $active>Portfolio</SiteLink>
            <SiteLink href="#contact">Contact</SiteLink>
          </SiteNav>
        </HeaderInner>
      </SiteHeader>
      <PortfolioSection>
        <Filters>
          {["All", "Websites", "Apps", "AI"].map((f) => (
            <Filter key={f} $active={f === "All"}>{f}</Filter>
          ))}
        </Filters>
        <Project>
          <ProjectTitle>TestLoad</ProjectTitle>
          <ProjectLink href="#portfolio">http://127.0.0.1:8000/</ProjectLink>
        </Project>
      </PortfolioSection>
      <ContactSection>
        <Column>
          <Heading>Send a message</Heading>
          <Label htmlFor="name">Name*</Label>
          <Field id="name" />
          <Label htmlFor="email">Email*</Label>
          <Field id="email" />
        </Column>
        <Column>
          <Heading>Get in touch</Heading>
          <Info><PhoneIcon /><div>Phone :<InfoValue>+254114143699</InfoValue></div></Info>
          <Info><MapIcon /><div>Address :<InfoValue>Thika kenya</InfoValue></div></Info>
          <Info><MailIcon /><div>Email :<InfoValue>kivseddy@gmail.com</InfoValue></div></Info>
        </Column>
      </ContactSection>
    </Page>
  );
}

export default function App() {
  return (
    <Desktop>
      <Global />
      <SystemMenu />
      <BrowserWindow>
        <BrowserChrome />
        <Portfolio />
      </BrowserWindow>
      <Dock>
        {dock.map((item, i) => {
          if (!item) return <DockRule key={i} />;
          const [name, Art, on] = item;
          return (
            <DockItem key={i} aria-label={name}>
              <Svg s={28}><Art /></Svg>
              <Running $on={on} />
            </DockItem>
          );
        })}
      </Dock>
    </Desktop>
  );
}
